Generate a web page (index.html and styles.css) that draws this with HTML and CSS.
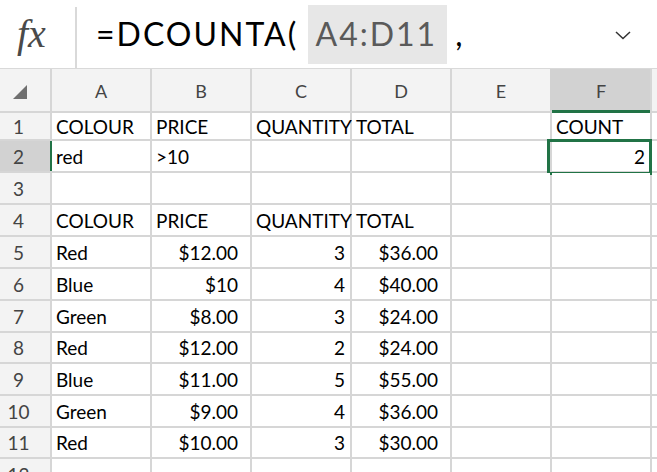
FILE: index.html
```html
<!DOCTYPE html>
<html>
<head>
<meta charset="utf-8">
<title>DCOUNTA</title>
<link rel="stylesheet" href="styles.css">
</head>
<body>
<div class="fbar">
	<div class="fx">fx</div>
	<div class="formula">=DCOUNTA( <span class="ref">A4:D11</span><span class="comma">,</span></div>
	<svg class="chev" width="20" height="10" viewBox="0 0 20 10"><polyline points="3,2 10,8.5 17,2" fill="none" stroke="#333" stroke-width="1.5"/></svg>
</div>

<div class="sheet">
	<div class="hd corner"><svg width="14" height="14" viewBox="0 0 14 14"><polygon points="14,0 14,14 0,14" fill="#6f6f6f"/></svg></div>
	<div class="hd">A</div><div class="hd">B</div><div class="hd">C</div><div class="hd">D</div><div class="hd">E</div><div class="hd sel">F</div><div class="hd"></div>

	<div class="rh">1</div>
	<div class="c">COLOUR</div><div class="c">PRICE</div><div class="c">QUANTITY</div><div class="c">TOTAL</div><div class="c"></div><div class="c">COUNT</div><div class="c"></div>

	<div class="rh sel">2</div>
	<div class="c">red</div><div class="c">&gt;10</div><div class="c"></div><div class="c"></div><div class="c"></div><div class="c r active">2</div><div class="c"></div>

	<div class="rh">3</div>
	<div class="c"></div><div class="c"></div><div class="c"></div><div class="c"></div><div class="c"></div><div class="c"></div><div class="c"></div>

	<div class="rh">4</div>
	<div class="c">COLOUR</div><div class="c">PRICE</div><div class="c">QUANTITY</div><div class="c">TOTAL</div><div class="c"></div><div class="c"></div><div class="c"></div>

	<div class="rh">5</div>
	<div class="c">Red</div><div class="c r cur">$12.00</div><div class="c r">3</div><div class="c r cur">$36.00</div><div class="c"></div><div class="c"></div><div class="c"></div>

	<div class="rh">6</div>
	<div class="c">Blue</div><div class="c r cur">$10</div><div class="c r">4</div><div class="c r cur">$40.00</div><div class="c"></div><div class="c"></div><div class="c"></div>

	<div class="rh">7</div>
	<div class="c">Green</div><div class="c r cur">$8.00</div><div class="c r">3</div><div class="c r cur">$24.00</div><div class="c"></div><div class="c"></div><div class="c"></div>

	<div class="rh">8</div>
	<div class="c">Red</div><div class="c r cur">$12.00</div><div class="c r">2</div><div class="c r cur">$24.00</div><div class="c"></div><div class="c"></div><div class="c"></div>

	<div class="rh">9</div>
	<div class="c">Blue</div><div class="c r cur">$11.00</div><div class="c r">5</div><div class="c r cur">$55.00</div><div class="c"></div><div class="c"></div><div class="c"></div>

	<div class="rh">10</div>
	<div class="c">Green</div><div class="c r cur">$9.00</div><div class="c r">4</div><div class="c r cur">$36.00</div><div class="c"></div><div class="c"></div><div class="c"></div>

	<div class="rh">11</div>
	<div class="c">Red</div><div class="c r cur">$10.00</div><div class="c r">3</div><div class="c r cur">$30.00</div><div class="c"></div><div class="c"></div><div class="c"></div>

	<div class="rh">12</div>
	<div class="c"></div><div class="c"></div><div class="c"></div><div class="c"></div><div class="c"></div><div class="c"></div><div class="c"></div>
</div>
</body>
</html>
```

FILE: styles.css
```css
html, body {
	margin: 0;
	padding: 0;
	background: #fff;
	overflow: hidden;
	height: 472px;
}

body {
	font-family: Lato, "Liberation Sans", sans-serif;
}

/* formula bar */
.fbar {
	display: flex;
	align-items: center;
	height: 68px;
	border-bottom: 1px solid #d9d9d9;
}
.fx {
	width: 77px;
	height: 61px;
	margin-top: 7px;
	border-right: 2px solid #d9d9d9;
	box-sizing: border-box;
	font-family: "Liberation Serif", serif;
	font-style: italic;
	font-size: 40px;
	color: #4a4a4a;
	display: flex;
	align-items: center;
	padding-left: 17px;
	padding-bottom: 8px;
}
.formula {
	margin-left: 19px;
	font-size: 32px;
	letter-spacing: 2px;
	color: #000;
	flex: 1;
	white-space: nowrap;
}
.ref {
	display: inline-block;
	background: #e7e7e7;
	color: #5a5a5a;
	padding: 9px 10px 11px 7px;
	margin: 0 2px 0 0;
}
.comma {
	margin-left: 6px;
}
.chev {
	margin-right: 24px;
	margin-top: 2px;
}

/* grid */
.sheet {
	display: grid;
	grid-template-columns: 50px repeat(6, 98px) 1fr;
	grid-template-rows: 42px 26px 30px 30px 30px 30px 30px 30px 29px 30px 30px 29px 30px;
	gap: 2px;
	background: #d6d6d6;
	font-size: 19px;
}
.hd {
	background: #f3f3f3;
	color: #444;
	display: flex;
	align-items: center;
	justify-content: center;
	padding-top: 2px;
	font-size: 18px;
}
.hd.sel {
	background: #d2d2d2;
	box-shadow: 0 2px 0 #217346, inset 0 -1px 0 #217346, -2px 0 0 #d2d2d2;
}
.corner {
	justify-content: flex-start;
	padding: 4px 0 0 13px;
}
.corner svg {
	display: block;
}
.rh {
	background: #f3f3f3;
	color: #444;
	display: flex;
	align-items: center;
	justify-content: center;
	padding-right: 13px;
}
.rh.sel {
	background: #d2d2d2;
	box-shadow: 2px 0 0 #217346;
}
.c {
	background: #fff;
	color: #000;
	display: flex;
	align-items: center;
	padding-left: 4px;
	white-space: nowrap;
	overflow: visible;
	position: relative;
}
.r {
	justify-content: flex-end;
	padding-left: 0;
	padding-right: 5px;
}
.cur {
	padding-right: 12px;
}
.active::after {
	content: "";
	position: absolute;
	top: -2px;
	left: -5px;
	right: -2px;
	bottom: -4px;
	border: 3px solid #217346;
}
```
